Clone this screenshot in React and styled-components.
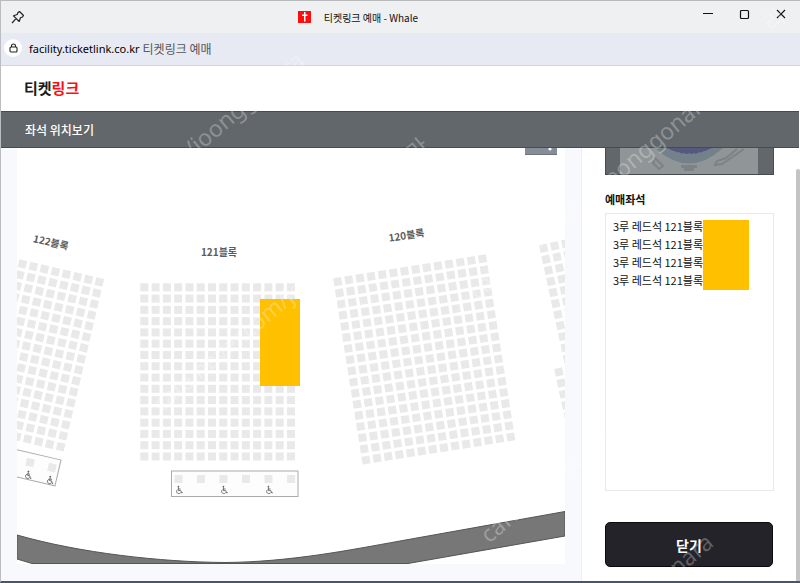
import React from 'react';
import styled, { createGlobalStyle } from 'styled-components';

const GlobalStyle = createGlobalStyle`
  * {
    box-sizing: border-box;
  }

  body {
    margin: 0;
    font-family: 'Noto Sans', 'Noto Sans CJK KR', sans-serif;
    color: #111;
  }
`;

const Window = styled.div`
  position: relative;
  display: flex;
  flex-direction: column;
  height: 100vh;
  overflow: hidden;
  background: #fff;
  border-top: 1px solid #b9babc;
  border-left: 1px solid #bcbdc0;
  border-bottom: 2px solid #4a5568;
`;

const TitleBar = styled.div`
  display: grid;
  grid-template-columns: 7fr auto 9fr;
  align-items: center;
  flex: none;
  height: 32px;
  padding: 0 12px 0 9px;
  background: #eff0f2;
`;

const WindowTitle = styled.div`
  display: flex;
  align-items: center;
  gap: 13px;
  font-family: 'Noto Sans CJK KR', sans-serif;
  font-size: 10px;
`;

const WindowButtons = styled.div`
  display: flex;
  justify-content: flex-end;
  gap: 25px;
  padding-bottom: 6px;
`;

const IconButton = styled.button`
  display: flex;
  width: ${props => props.size || 12}px;
  height: ${props => props.size || 12}px;
  padding: 0;
  border: 0;
  background: none;
`;

const AddressBar = styled.div`
  display: flex;
  align-items: center;
  flex: none;
  height: 33px;
  padding: 0 0 2px 3px;
  background: #e7eaf2;
  border-bottom: 1px solid #d3d5d9;
`;

const LockBadge = styled.span`
  display: flex;
  align-items: center;
  justify-content: center;
  width: 18px;
  height: 18px;
  margin-right: 7px;
  border-radius: 50%;
  background: #fff;
`;

const Host = styled.span`
  font-size: 11px;
  margin-right: 3px;
  color: #000;
`;

const PageName = styled.span`
  font-family: 'Noto Sans CJK KR', sans-serif;
  font-size: 12px;
  color: #555;
`;

const Header = styled.header`
  display: flex;
  align-items: center;
  flex: none;
  height: 45px;
  padding: 0 0 2px 23px;
`;

const Logo = styled.a`
  font-family: 'Noto Sans CJK KR', sans-serif;
  font-size: 15px;
  font-weight: 700;
  color: #1c1c1c;
  text-decoration: none;

  span {
    color: #fb0d10;
  }
`;

const SectionBar = styled.h1`
  display: flex;
  align-items: center;
  flex: none;
  height: 37px;
  margin: 0 1px 0 0;
  padding-left: 24px;
  background: #62676b;
  border-top: 1px solid #474b50;
  border-bottom: 1px solid #474b50;
  color: #fff;
  font-family: 'Noto Sans CJK KR', sans-serif;
  font-size: 12px;
  font-weight: 500;
`;

const Content = styled.main`
  display: flex;
  flex: 1;
  min-height: 0;
`;

const MapArea = styled.section`
  display: flex;
  flex: 1;
  min-width: 0;
  padding: 0 16px 17px;
  background: #f7f9fc;
  border-right: 1px solid #eceef1;
`;

const MapCanvas = styled.div`
  position: relative;
  flex: 1;
  min-width: 0;
  background: #fff;
  overflow: hidden;

  > svg {
    display: block;
    width: 100%;
    height: 100%;
  }
`;

const MapTool = styled.button`
  position: absolute;
  top: 0;
  right: 8px;
  width: 32px;
  height: 7px;
  padding: 0;
  border: 0;
  border-bottom: 1px solid #6b7280;
  background: radial-gradient(circle at 25px 1px, #fff 1px, #868d96 2px);
`;

const Sidebar = styled.aside`
  display: flex;
  flex-direction: column;
  flex: none;
  width: 214px;
  padding: 0 22px 14px 23px;
`;

const MiniMap = styled.svg`
  display: block;
  flex: none;
  width: 100%;
  height: 27px;
`;

const SidebarTitle = styled.h2`
  margin: 15px 0 5px;
  font-family: 'Noto Sans CJK KR', sans-serif;
  font-size: 11px;
  line-height: 18px;
  font-weight: 700;
`;

const SeatBox = styled.div`
  display: flex;
  align-items: flex-start;
  flex: 1;
  padding: 3px 7px;
  border: 1px solid #e8e9eb;
`;

const SeatList = styled.ul`
  margin: 0;
  padding: 0;
  list-style: none;
  white-space: nowrap;
  font-family: 'Noto Sans CJK KR', sans-serif;
  font-size: 11px;
  line-height: 18px;
`;

const SeatCover = styled.div`
  width: 46px;
  height: 70px;
  margin-top: 3px;
  background: #ffc000;
`;

const CloseButton = styled.button`
  height: 45px;
  margin-top: 31px;
  margin-right: 1px;
  border: 1px solid #0c0c10;
  border-radius: 5px;
  background: #242329;
  color: #fff;
  font-family: 'Noto Sans CJK KR', sans-serif;
  font-size: 14px;
  font-weight: 700;
`;

const ScrollTrack = styled.div`
  flex: none;
  width: 4px;
  padding-top: 21px;
`;

const ScrollThumb = styled.div`
  height: 100%;
  border-radius: 2px 2px 0 0;
  background: #c3c4c6;
`;

const Watermark = styled.svg`
  position: absolute;
  inset: 0;
  width: 100%;
  height: 100%;
  pointer-events: none;
  fill: #fff;
  fill-opacity: 0.28;
  font-family: 'Noto Sans', 'Noto Sans CJK KR', sans-serif;
  font-size: 23px;
`;

const PITCH = 11.28;

function Seats({ x, y, angle = 0, cols, rows, from = 0, fromRow = 0 }) {
  return (
    <g transform={`translate(${x} ${y}) rotate(${angle})`} fill="#e9e9e9">
      {Array.from({ length: rows }).map((_, row) =>
        Array.from({ length: cols }).map((_, col) => (
          <rect
            key={`${row}-${col}`}
            x={(col + from) * PITCH - 4}
            y={(row + fromRow) * PITCH - 4}
            width="8"
            height="8"
          />
        ))
      )}
    </g>
  );
}

function Wheelchair({ x, y }) {
  return (
    <g transform={`translate(${x} ${y})`} fill="none" stroke="#555" strokeWidth="0.8">
      <circle cx="-0.6" cy="-3.3" r="0.5" fill="#555" />
      <path d="M-0.6 -2.6V0.6H1.8L2.8 3L3.8 2.6M-0.6 -1H1.6" />
      <path d="M-1.4 -0.4A2.2 2.2 0 1 0 1.8 2.4" />
    </g>
  );
}

function BlockLabel({ x, y, angle = 0, children }) {
  return (
    <text
      transform={`translate(${x} ${y}) rotate(${angle})`}
      textAnchor="middle"
      fontFamily="'Noto Sans CJK KR', sans-serif"
      fontSize="10"
      fontWeight="700"
      fill="#5c5c5c"
    >
      {children}
    </text>
  );
}

function SeatMap() {
  return (
    <svg viewBox="0 0 548 416" preserveAspectRatio="xMinYMin slice" role="img">
      <Seats x={82.3} y={134} angle={13.2} cols={12} rows={16} from={-11} />
      <Seats x={127.3} y={139.3} cols={14} rows={16} />
      <Seats x={320.7} y={133.7} angle={-9} cols={14} rows={17} />
      <Seats x={526.7} y={100.3} angle={-12.2} cols={4} rows={11} />
      <Seats x={526.7} y={100.3} angle={-12.2} cols={5} rows={6} from={-1} fromRow={11} />

      <BlockLabel x={33} y={98} angle={13}>122블록</BlockLabel>
      <BlockLabel x={202} y={108}>121블록</BlockLabel>
      <BlockLabel x={390} y={91} angle={-9}>120블록</BlockLabel>

      <rect x="154.5" y="323" width="126.5" height="25.5" fill="#fdfdfd" stroke="#aaa" />
      {[0, 1, 2, 3, 4, 5].map(i => (
        <rect key={i} x={157.5 + i * 22.5} y="327" width="8" height="8" fill="#e9e9e9" />
      ))}
      {[162, 207, 252].map(x => (
        <Wheelchair key={x} x={x} y={342} />
      ))}

      <g transform="translate(44 312) rotate(13.2)">
        <rect x="-130" y="0" width="130" height="26.5" fill="#fdfdfd" stroke="#aaa" />
        {[-11, -33.5].map(x => (
          <g key={x}>
            <rect x={x} y="5.5" width="8" height="8" fill="#e9e9e9" />
            <Wheelchair x={x + 5} y={22} />
          </g>
        ))}
      </g>

      <path
        d="M0 387C63 405 143 414 208 414.5C273 414 333 402 383 393L548 363.5V388L391 415.5H15L0 411Z"
        fill="#777"
        stroke="#555"
        strokeWidth="1"
      />
      <rect x="243" y="151" width="40" height="87" fill="#ffc000" />
    </svg>
  );
}

function StadiumMiniMap() {
  return (
    <MiniMap viewBox="0 0 169 27" preserveAspectRatio="none" aria-hidden="true">
      <rect width="169" height="27" fill="#62676b" />
      <rect x="15" width="138" height="26" fill="#909598" />
      <path d="M50 0Q84 31 118 0Z" fill="#75818a" />
      <path d="M62 0Q84 12 107 0Z" fill="#55597f" />
      <path d="M64 2Q84 9 105 2" fill="none" stroke="#8388a5" strokeWidth="1" strokeDasharray="1 4" />
      <path d="M76 17H92V20H89V23H79V20H76Z" fill="#7c8285" />
      <path d="M50 10L58 18L54 21L48 15Z" fill="none" stroke="#7c8285" strokeWidth="2" />
      <path d="M132 1L121 10L112 13L110 17L117 16L139 1" fill="none" stroke="#7c8285" strokeWidth="2" />
      <path d="M0 26.5H169M0.5 0V27M168.5 0V27" stroke="#474b50" />
    </MiniMap>
  );
}

const reserved = ['3루 레드석 121블록', '3루 레드석 121블록', '3루 레드석 121블록', '3루 레드석 121블록'];

const marks = [
  { x: 305, y: 62, anchor: 'end', text: 'cafe.naver.com/joonggonara' },
  { x: 713, y: 101, anchor: 'end', text: 'cafe.naver.com/joonggonara' },
  { x: 714, y: 544, anchor: 'end', text: 'nara' },
  { x: 488, y: 543, anchor: 'start', text: 'cafe.naver.com/joonggonara' },
  { x: 160, y: 412, anchor: 'start', text: 'cafe.naver.com/joonggonara' },
  { x: 430, y: 148, anchor: 'end', text: '중고나라' },
  { x: 771, y: 32, anchor: 'start', text: '라' },
];

export default function App() {
  return (
    <>
      <GlobalStyle />
      <Window>
        <TitleBar>
          <IconButton type="button" size={16} aria-label="Pin">
            <svg width="16" height="16" viewBox="0 0 16 16" fill="none" stroke="#222" strokeWidth="1.2" strokeLinejoin="round">
              <path d="M9.5 2.5L13.5 6.5L12.5 8L10.5 8.8L9.2 12.5L3.5 6.8L7.2 5.5L8 3.5ZM6 9.7L2 14" />
            </svg>
          </IconButton>
          <WindowTitle>
            <svg width="13" height="12" viewBox="0 0 13 12" aria-hidden="true">
              <rect width="13" height="12" fill="#fb0d10" />
              <path d="M6 1H7.5V3.5H9.5V5H7.5V10.5H6V5H4V3.5H6Z" fill="#fff" />
            </svg>
            <span>티켓링크 예매 - Whale</span>
          </WindowTitle>
          <WindowButtons>
            <IconButton type="button" aria-label="Minimize">
              <svg width="12" height="12" stroke="#111"><path d="M1 5.5H11" /></svg>
            </IconButton>
            <IconButton type="button" aria-label="Maximize">
              <svg width="12" height="12" stroke="#111" fill="none"><rect x="1.5" y="2.5" width="8" height="8" rx="1" strokeWidth="1.2" /></svg>
            </IconButton>
            <IconButton type="button" aria-label="Close">
              <svg width="12" height="12" stroke="#111"><path d="M1 2L9 10M9 2L1 10" strokeWidth="1.1" /></svg>
            </IconButton>
          </WindowButtons>
        </TitleBar>
        <AddressBar>
          <LockBadge>
            <svg width="9" height="10" viewBox="0 0 9 10" fill="none" stroke="#222" strokeWidth="1.1">
              <rect x="1" y="4" width="7" height="5" rx="1" />
              <path d="M2.5 4V3A2 2 0 0 1 6.5 3V4" />
            </svg>
          </LockBadge>
          <Host>facility.ticketlink.co.kr</Host>
          <PageName>티켓링크 예매</PageName>
        </AddressBar>
        <Header>
          <Logo href="#">티켓<span>링크</span></Logo>
        </Header>
        <SectionBar>좌석 위치보기</SectionBar>
        <Content>
          <MapArea>
            <MapCanvas>
              <SeatMap />
              <MapTool type="button" aria-label="Zoom" />
            </MapCanvas>
          </MapArea>
          <Sidebar>
            <StadiumMiniMap />
            <SidebarTitle>예매좌석</SidebarTitle>
            <SeatBox>
              <SeatList>
                {reserved.map((seat, index) => (
                  <li key={index}>{seat}</li>
                ))}
              </SeatList>
              <SeatCover />
            </SeatBox>
            <CloseButton type="button">닫기</CloseButton>
          </Sidebar>
          <ScrollTrack>
            <ScrollThumb />
          </ScrollTrack>
        </Content>
        <Watermark aria-hidden="true">
          {marks.map((mark, index) => (
            <text key={index} textAnchor={mark.anchor} transform={`translate(${mark.x} ${mark.y}) rotate(-40)`}>
              {mark.text}
            </text>
          ))}
        </Watermark>
      </Window>
    </>
  );
}
